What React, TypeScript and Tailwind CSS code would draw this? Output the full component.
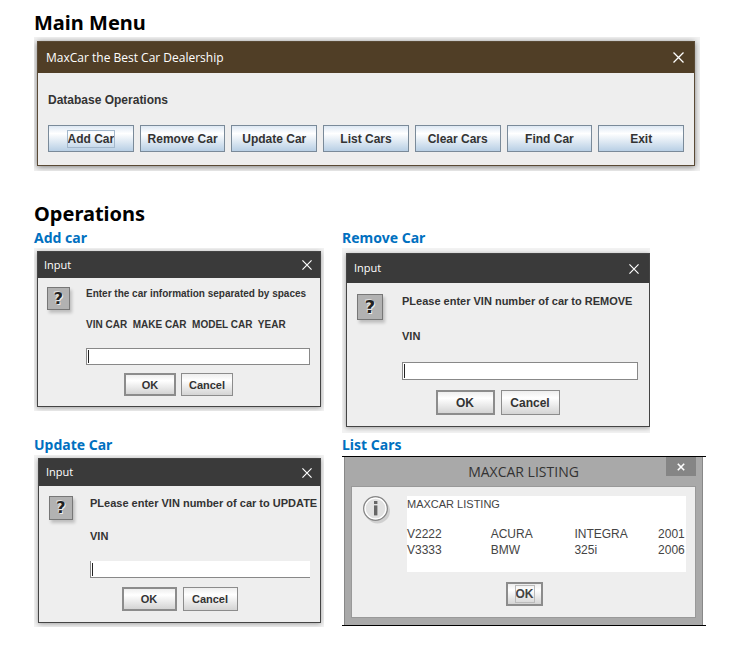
import React from "react";

interface InputDialogProps {
    id: string;
    title: string;
    message: string;
    label: string;
    frame: string;
    titleBar: string;
    icon: string;
    body: string;
    textBox: string;
    buttons: string;
}

interface Car {
    vin: string;
    make: string;
    model: string;
    year: number;
}

const operations = ["Add Car", "Remove Car", "Update Car", "List Cars", "Clear Cars", "Find Car", "Exit"];

const cars: Car[] = [
    { vin: "V2222", make: "ACURA", model: "INTEGRA", year: 2001 },
    { vin: "V3333", make: "BMW", model: "325i", year: 2006 },
];

function CloseButton({ size }: { size: number }) {
    return (
        <button type="button" aria-label="Close" className="text-white">
            <svg width={size} height={size} viewBox="0 0 11 11" fill="none" stroke="currentColor" strokeWidth="1.3">
                <path d="M0.5 0.5L10.5 10.5M10.5 0.5L0.5 10.5" />
            </svg>
        </button>
    );
}

function InputDialog(props: InputDialogProps) {
    return (
        <section className="min-w-0">
            <h3 className="font-['Noto_Sans'] text-sm leading-5 font-bold text-[#0070c0]">{props.title}</h3>
            <div className={`overflow-hidden bg-[#f3f3f3] ${props.frame}`}>
                <div className="border border-[#444] bg-[#eee] shadow-[0_1px_5px_rgba(0,0,0,0.35)]">
                    <div className={`flex items-center justify-between bg-[#3a3a3a] text-[11px] text-white ${props.titleBar}`}>
                        <span className="font-['Open_Sans']">Input</span>
                        <CloseButton size={10} />
                    </div>
                    <form className={props.body} onSubmit={(e) => e.preventDefault()}>
                        <div className="flex items-start">
                            <span
                                className={`flex shrink-0 items-center justify-center border border-[#777] bg-[#b2b2b2] font-['DejaVu_Sans'] font-bold text-[#222] shadow-[2px_3px_3px_rgba(0,0,0,0.2)] [text-shadow:1px_1px_0_#eee,-1px_-1px_0_#ddd] ${props.icon}`}
                            >
                                ?
                            </span>
                            <div className="flex min-w-0 flex-1 flex-col whitespace-pre">
                                <p>{props.message}</p>
                                <label htmlFor={props.id}>{props.label}</label>
                                <div className="relative flex">
                                    <input id={props.id} type="text" className={`w-full min-w-0 bg-white px-1 outline-none ${props.textBox}`} />
                                    {/* text caret */}
                                    <span className="absolute top-0.5 bottom-0.5 left-0.5 w-px bg-[#222]" />
                                </div>
                            </div>
                        </div>
                        <div className={`flex justify-center ${props.buttons}`}>
                            <button type="submit" className="border-2 border-[#8c8c8c] bg-linear-to-b from-[#eee] via-white via-30% to-[#d4d4d4]">
                                OK
                            </button>
                            <button type="button" className="border border-[#8c8c8c] bg-linear-to-b from-[#eee] via-white via-30% to-[#d4d4d4]">
                                Cancel
                            </button>
                        </div>
                    </form>
                </div>
            </div>
        </section>
    );
}

function MainMenu() {
    return (
        <div className="mr-1.5 overflow-hidden bg-[#f3f3f3] pt-1 pr-[5px] pb-[5px] pl-[3px]">
            <div className="border border-[#5a4a35] bg-[#eee] shadow-[0_1px_6px_rgba(0,0,0,0.5)]">
                <div className="flex h-[31px] items-center justify-between bg-[#503e26] pr-2.5 pl-2 text-white">
                    <span className="font-['Open_Sans'] text-xs">MaxCar the Best Car Dealership</span>
                    <CloseButton size={11} />
                </div>
                <div className="px-2.5 pt-[19px] pb-[13px] text-xs leading-4 font-bold">
                    <p>Database Operations</p>
                    <div className="mt-[17px] grid grid-cols-7 gap-1.5">
                        {operations.map((name, i) => (
                            <button
                                key={name}
                                type="button"
                                className="flex h-[27px] items-center justify-center border border-[#7a8a99] bg-linear-to-b from-[#dde8f3] via-white via-30% to-[#b8cfe5] whitespace-nowrap"
                            >
                                <span className={i === 0 ? "outline outline-[#a3b8cc]" : ""}>{name}</span>
                            </button>
                        ))}
                    </div>
                </div>
            </div>
        </div>
    );
}

function ListingDialog() {
    return (
        <section className="min-w-0">
            <h3 className="font-['Noto_Sans'] text-sm leading-5 font-bold text-[#0070c0]">List Cars</h3>
            <div className="mt-px border-y border-black pr-[3px] pl-0.5">
                <div className="border-x border-[#888] bg-[#a9a9a9] px-1.5 pb-[7px]">
                    <div className="relative flex h-[29px] items-center justify-center">
                        <span className="font-['Open_Sans'] text-sm text-[#333]">MAXCAR LISTING</span>
                        <button type="button" aria-label="Close" className="absolute top-0 right-0 flex h-[19px] w-[30px] items-center justify-center bg-[#858585]">
                            <svg width="8" height="8" viewBox="0 0 8 8" fill="none" stroke="white" strokeWidth="1.6">
                                <path d="M0.8 0.8L7.2 7.2M7.2 0.8L0.8 7.2" />
                            </svg>
                        </button>
                    </div>
                    <div className="border border-[#999] bg-[#eee] pt-[9px] pr-[9px] pb-[11px] pl-[11px]">
                        <div className="flex items-start">
                            <svg width="30" height="32" viewBox="0 0 30 32" className="mr-3.5 shrink-0">
                                <circle cx="14.5" cy="15" r="12.5" fill="#d0d0d0" />
                                <circle cx="12.5" cy="12.5" r="11.8" fill="#e2e2e2" stroke="#888" strokeWidth="1.4" />
                                <circle cx="12.5" cy="12.5" r="10.4" fill="none" stroke="#fff" strokeWidth="1.2" />
                                <rect x="11" y="5" width="3.4" height="3" fill="#666" />
                                <rect x="11" y="9.4" width="3.4" height="10" fill="#666" />
                            </svg>
                            <div className="h-[76px] flex-1 bg-white text-xs leading-4 text-[#444]">
                                <p className="text-[11px]">MAXCAR LISTING</p>
                                <table className="mt-3.5 w-full table-fixed border-collapse">
                                    <tbody>
                                        {cars.map((car) => (
                                            <tr key={car.vin}>
                                                <td className="w-[30%] p-0">{car.vin}</td>
                                                <td className="w-[30%] p-0">{car.make}</td>
                                                <td className="w-[30%] p-0">{car.model}</td>
                                                <td className="p-0 whitespace-nowrap">{car.year}</td>
                                            </tr>
                                        ))}
                                    </tbody>
                                </table>
                            </div>
                        </div>
                        <div className="mt-2.5 flex justify-center">
                            <button type="button" className="flex h-6 w-[37px] items-center justify-center border-2 border-[#8c8c8c] bg-linear-to-b from-[#eee] via-white via-30% to-[#d4d4d4] text-xs leading-4 font-bold text-[#444]">
                                <span className="outline outline-[#bbb]">OK</span>
                            </button>
                        </div>
                    </div>
                </div>
            </div>
        </section>
    );
}

export default function App() {
    return (
        <main className="bg-white pt-[9px] pr-6 pb-7 pl-[34px] font-['Liberation_Sans',sans-serif] text-[#333]">
            <h2 className="font-['Noto_Sans'] text-xl leading-7 font-bold text-black">Main Menu</h2>
            <MainMenu />
            <h2 className="mt-[29px] font-['Noto_Sans'] text-xl leading-7 font-bold text-black">Operations</h2>
            <div className="grid grid-cols-[11fr_13fr] gap-y-0.5">
                <InputDialog
                    id="add-car"
                    title="Add car"
                    message="Enter the car information separated by spaces"
                    label="VIN CAR  MAKE CAR  MODEL CAR  YEAR"
                    frame="mr-[18px] pt-[3px] pr-[3px] pb-1 pl-[3px]"
                    titleBar="h-[26px] pr-2 pl-1.5"
                    icon="mr-4 size-[23px] text-base"
                    body="pt-[9px] pr-2.5 pb-2.5 pl-[9px] text-[10px] leading-[14px] font-bold [&_label]:mt-[17px] [&_label]:mb-4"
                    textBox="h-[17px] border border-[#888]"
                    buttons="mt-2 gap-[5px] [&>button]:h-[23px] [&>button]:w-[52px] [&>button]:text-[11px]"
                />
                <InputDialog
                    id="remove-car"
                    title="Remove Car"
                    message="PLease enter VIN number of car to REMOVE"
                    label="VIN"
                    frame="mr-14 pt-[5px] pb-1.5 pl-1"
                    titleBar="h-[29px] pr-2.5 pl-[7px]"
                    icon="mr-[19px] size-[26px] text-lg"
                    body="pt-[11px] pr-[11px] pb-[11px] pl-2.5 text-[11px] leading-[14px] font-bold [&_label]:mt-[21px] [&_label]:mb-[19px]"
                    textBox="h-[18px] border border-[#888]"
                    buttons="mt-2.5 gap-1.5 [&>button]:h-[25px] [&>button]:w-[59px] [&>button]:text-xs"
                />
                <InputDialog
                    id="update-car"
                    title="Update Car"
                    message="PLease enter VIN number of car to UPDATE"
                    label="VIN"
                    frame="mr-[18px] pt-[3px] pr-[3px] pb-1 pl-1"
                    titleBar="h-[27px] pr-2 pl-[7px]"
                    icon="mr-[17px] size-6 text-base"
                    body="pt-[10px] pr-2.5 pb-[11px] pl-2.5 text-[11px] leading-[14px] font-bold [&_label]:mt-[19px] [&_label]:mb-[18px]"
                    textBox="h-[17px] border-b border-l border-[#888]"
                    buttons="mt-[9px] gap-1.5 [&>button]:h-6 [&>button]:w-[55px]"
                />
                <ListingDialog />
            </div>
        </main>
    );
}
